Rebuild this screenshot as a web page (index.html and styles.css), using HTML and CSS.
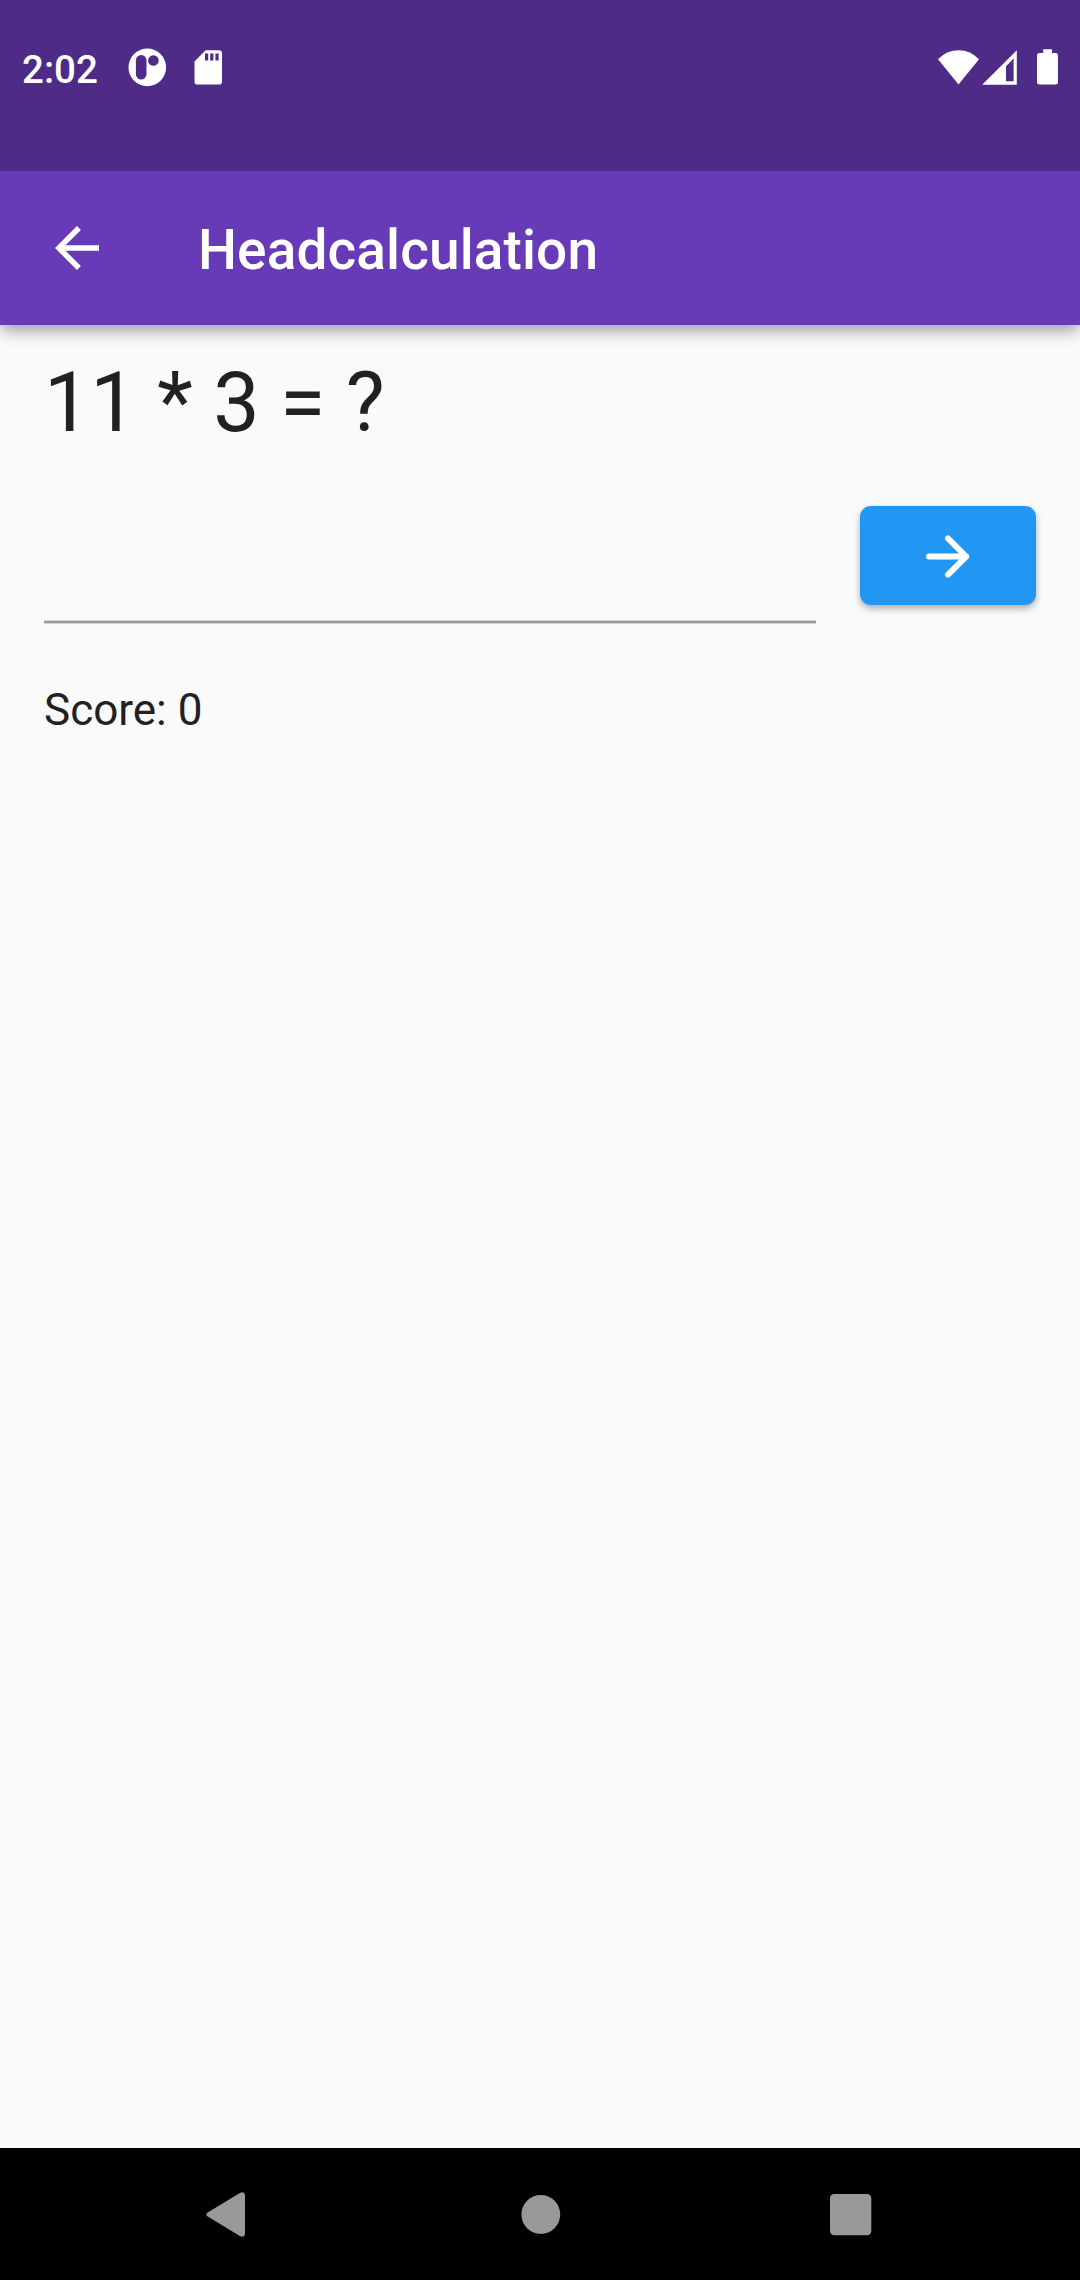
FILE: index.html
```html
<!DOCTYPE html>
<html lang="en">
<head>
<meta charset="utf-8">
<title>Headcalculation</title>
<link rel="stylesheet" href="styles.css">
</head>
<body>
<div class="screen">
  <div class="status-bar">
    <span class="clock">2:02</span>
    <svg class="icon-notification" width="40" height="40" viewBox="127 48 40 40">
      <path fill="#fff" fill-rule="evenodd" d="M147.3 48.6a18.8 18.8 0 1 0 0 37.6a18.8 18.8 0 1 0 0-37.6zM141.2 55a5.3 5.3 0 0 1 5.3 5.3v14a5.3 5.3 0 0 1-10.6 0v-14a5.3 5.3 0 0 1 5.3-5.3zM153.4 55.2a5.3 5.3 0 1 1 0 10.6a5.3 5.3 0 1 1 0-10.6z"/>
    </svg>
    <svg class="icon-card" width="30" height="40" viewBox="193 48 30 40">
      <path fill="#fff" fill-rule="evenodd" d="M205.6 50.2h13.2a3.2 3.2 0 0 1 3.2 3.2v28a3.2 3.2 0 0 1-3.2 3.2h-21.1a3.2 3.2 0 0 1-3.2-3.2v-20zM205 53.6v7h3.2v-7zM210.2 53.6v7h3.2v-7zM215.4 53.6v7h3.2v-7z"/>
    </svg>
    <span class="spacer"></span>
    <svg width="122" height="40" viewBox="936 48 122 40">
      <g fill="#fff">
        <path d="M938 59.3Q946.5 50.3 958.5 50.3T979 59.3L958.5 84.6z"/>
        <path fill-rule="evenodd" d="M982.2 84.7L1016.8 50.2V84.7zM1006 66.2V81.2H1013.6V58.6z"/>
        <path d="M1043.2 49.3h8.8v3.7h3.6a2.4 2.4 0 0 1 2.4 2.4v26.8a2.4 2.4 0 0 1-2.4 2.4h-16.2a2.4 2.4 0 0 1-2.4-2.4v-26.8a2.4 2.4 0 0 1 2.4-2.4h3.8z"/>
      </g>
    </svg>
  </div>
  <header class="app-bar">
    <svg class="icon-back" width="66" height="66" viewBox="0 0 24 24">
      <path fill="#fff" d="M20 11H7.83l5.59-5.59L12 4l-8 8 8 8 1.41-1.41L7.83 13H20v-2z"/>
    </svg>
    <h1 class="title">Headcalculation</h1>
  </header>
  <main class="content">
    <div class="expression">11 * 3 = ?</div>
    <div class="answer-row">
      <div class="answer-field"></div>
      <button class="submit" type="button" aria-label="Submit">
        <svg width="66" height="66" viewBox="0 0 24 24">
          <path fill="none" stroke="#fff" stroke-width="2.15" stroke-linecap="round" stroke-linejoin="round" d="M5.1 12.2H18.6M12 5.6L18.6 12.2L12 18.8"/>
        </svg>
      </button>
    </div>
    <div class="score">Score: 0</div>
  </main>
  <nav class="nav-bar">
    <svg width="44" height="48" viewBox="204 2190 44 48"><path fill="#999" d="M207.7 2212.4Q205 2214.5 207.7 2216.6L240.2 2236.2Q245 2238 245 2233.2V2195.7Q245 2190.8 240.2 2192.7z"/></svg>
    <svg width="44" height="44" viewBox="0 0 44 44"><circle cx="23.8" cy="22.5" r="19.4" fill="#999"/></svg>
    <svg width="44" height="44" viewBox="0 0 44 44"><rect x="1" y="2" width="41.3" height="41.3" rx="4.2" fill="#999"/></svg>
  </nav>
</div>
</body>
</html>
```
FILE: styles.css
```css
* { box-sizing: border-box; }
body {
  margin: 0;
  background: #fafafa;
  color: #212121;
  font-family: Roboto, sans-serif;
}
svg { display: block; flex: none; }
.screen {
  display: flex;
  flex-direction: column;
  width: 1080px;
  height: 2280px;
  overflow: hidden;
}
.status-bar {
  position: relative;
  z-index: 1;
  display: flex;
  align-items: flex-start;
  height: 171px;
  padding: 48px 22px 0;
  background: #4d2b87;
  color: #fff;
}
.clock {
  width: 105px;
  font-size: 38.5px;
  font-weight: 500;
  line-height: 43px;
}
.icon-card { margin-left: 26px; }
.spacer { flex: 1; }
.app-bar {
  display: flex;
  align-items: center;
  height: 154px;
  padding-left: 44px;
  background: #673ab7;
  color: #fff;
  box-shadow: 0 8px 16px -2px rgba(0, 0, 0, .28), 0 3px 14px rgba(0, 0, 0, .14);
}
.icon-back { margin-right: 88px; }
.title {
  margin: 0;
  padding-top: 4px;
  font-size: 55px;
  font-weight: 500;
  line-height: 64px;
  letter-spacing: .1px;
}
.content {
  flex: 1;
  padding: 29px 44px 0;
}
.expression {
  font-size: 82.5px;
  line-height: 97px;
}
.answer-row {
  display: flex;
  gap: 44px;
  height: 173px;
}
.answer-field {
  flex: 1;
  background: linear-gradient(#d4d4d4 1px, #9b9b9b 1px 3px, #d4d4d4 3px) bottom / 100% 4px no-repeat;
}
.submit {
  display: flex;
  align-items: center;
  justify-content: center;
  width: 176px;
  height: 99px;
  margin-top: 55px;
  padding: 0;
  border: 0;
  border-radius: 11px;
  background: #2196f3;
  box-shadow: 0 4px 7px rgba(0, 0, 0, .26), 0 1px 5px rgba(0, 0, 0, .08);
}
.score {
  margin-top: 60px;
  font-size: 44px;
  line-height: 52px;
}
.nav-bar {
  display: flex;
  align-items: center;
  justify-content: space-between;
  height: 132px;
  padding: 0 207px 0 204px;
  background: #000;
}
```
